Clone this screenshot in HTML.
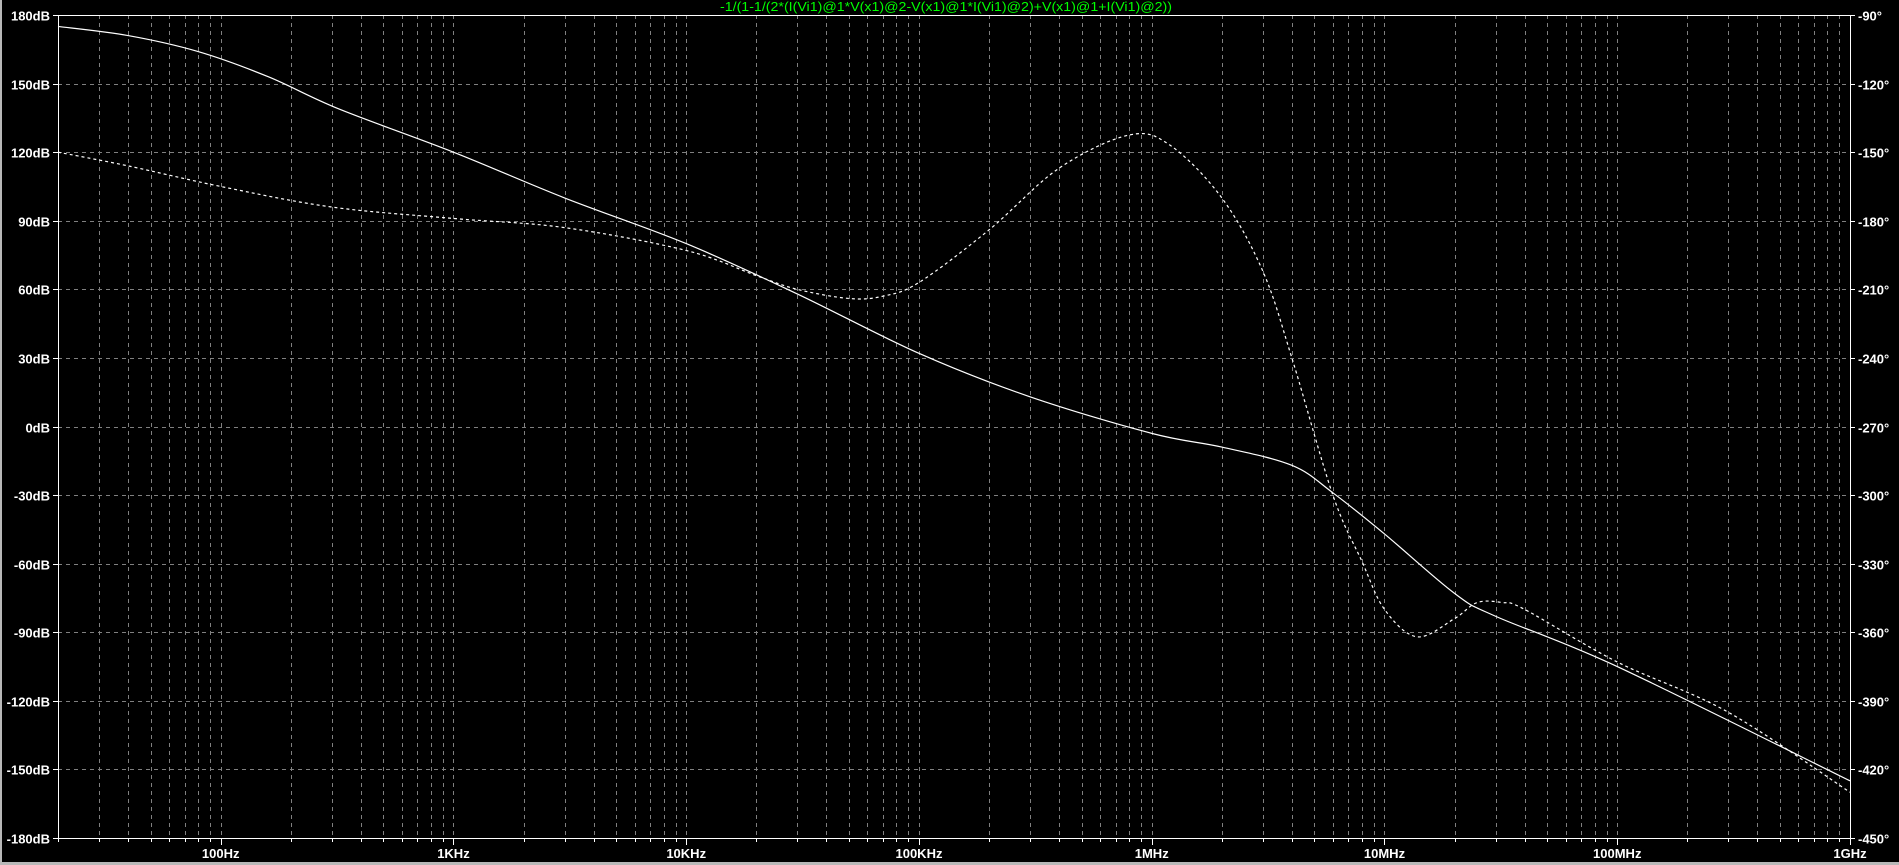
<!DOCTYPE html>
<html><head><meta charset="utf-8"><style>
html,body{margin:0;padding:0;background:#000;width:1899px;height:865px;overflow:hidden}
svg{display:block}
text{font-family:"Liberation Sans",Arial,sans-serif;font-weight:bold;font-size:13px;fill:#fff}
</style></head><body>
<svg id="s" width="1899" height="865" xmlns="http://www.w3.org/2000/svg">
<rect x="0" y="0" width="1899" height="865" fill="#000"/>
<rect x="0" y="0" width="2" height="865" fill="#b8b8b8"/>
<rect x="0" y="862" width="1899" height="3" fill="#b8b8b8"/>
<text x="720" y="11" textLength="452" lengthAdjust="spacingAndGlyphs" style="fill:#00ff00;font-weight:normal;font-size:13px">-1/(1-1/(2*(I(Vi1)@1*V(x1)@2-V(x1)@1*I(Vi1)@2)+V(x1)@1+I(Vi1)@2))</text>
<g id="grid"></g>
<g id="curves"></g>
</svg>
<script>
var L=58,R=1850,T=15,B=838,D=232.76,ns="http://www.w3.org/2000/svg";
function X(f){return L+D*(Math.log10(f)-Math.log10(20));}
function Y(db){return T+(180-db)*(B-T)/360;}
var g=document.getElementById('grid'),h='';
for(var e=1;e<=9;e++){for(var m=1;m<=9;m++){var f=m*Math.pow(10,e);if(f<20||f>1e9)continue;var x=Math.round(X(f))+0.5;
 if(f>20&&f<1e9)h+='<line x1="'+x+'" y1="'+T+'" x2="'+x+'" y2="'+B+'" stroke="#808080" stroke-dasharray="4 4"/>';
 h+='<line x1="'+x+'" y1="'+B+'" x2="'+x+'" y2="'+(B+(m==1?7:4))+'" stroke="#fff"/>';}}
for(var i=0;i<=12;i++){var y=Math.round(T+i*(B-T)/12)+0.5;var db=180-30*i,ph=-90-30*i;
 if(i>0&&i<12)h+='<line x1="'+L+'" y1="'+y+'" x2="'+R+'" y2="'+y+'" stroke="#808080" stroke-dasharray="4 4"/>';
 h+='<line x1="'+(L-5)+'" y1="'+y+'" x2="'+L+'" y2="'+y+'" stroke="#fff"/><line x1="'+R+'" y1="'+y+'" x2="'+(R+5)+'" y2="'+y+'" stroke="#fff"/>';
 h+='<text x="'+(L-8)+'" y="'+(y+5)+'" text-anchor="end">'+db+'dB</text>';
 h+='<text x="'+(R+8)+'" y="'+(y+5)+'">'+ph+'°</text>';}
h+='<line x1="'+(L+0.5)+'" y1="'+T+'" x2="'+(L+0.5)+'" y2="'+B+'" stroke="#fff"/>';
h+='<line x1="'+(R+0.5)+'" y1="'+T+'" x2="'+(R+0.5)+'" y2="'+B+'" stroke="#fff"/>';
h+='<line x1="'+L+'" y1="'+(T+0.5)+'" x2="'+R+'" y2="'+(T+0.5)+'" stroke="#fff"/>';
h+='<line x1="'+L+'" y1="'+(B+0.5)+'" x2="'+R+'" y2="'+(B+0.5)+'" stroke="#fff"/>';
var labs=[[100,'100Hz'],[1e3,'1KHz'],[1e4,'10KHz'],[1e5,'100KHz'],[1e6,'1MHz'],[1e7,'10MHz'],[1e8,'100MHz'],[1e9,'1GHz']];
labs.forEach(function(l){h+='<text x="'+X(l[0])+'" y="'+(B+20)+'" text-anchor="middle">'+l[1]+'</text>';});
g.innerHTML=h;
function path(pts){var p=pts.map(function(a){return [X(a[0]),Y(a[1])];});var d='M'+p[0][0]+' '+p[0][1];
 for(var i=0;i<p.length-1;i++){var p0=p[i-1]||p[i],p1=p[i],p2=p[i+1],p3=p[i+2]||p2;
 d+=' C'+(p1[0]+(p2[0]-p0[0])/6)+' '+(p1[1]+(p2[1]-p0[1])/6)+' '+(p2[0]-(p3[0]-p1[0])/6)+' '+(p2[1]-(p3[1]-p1[1])/6)+' '+p2[0]+' '+p2[1];}
 return d;}
var solid=[[20,175],[40,171],[80,164],[160,153],[320,139],[1e3,120],[3e3,100],[1e4,80],[3e4,58],[1e5,32],[3e5,13],[1e6,-3],[2e6,-9],[4e6,-17],[6e6,-29],[1e7,-47],[2e7,-73],[3e7,-83],[1e8,-105],[1e9,-155]];
var dash=[[20,120],[40,114],[100,105],[300,96],[1e3,91],[3e3,87],[1e4,77],[2e4,66],[3e4,60],[5e4,56],[7e4,57],[1e5,63],[2e5,86],[4e5,113],[8e5,127.5],[1.2e6,123],[2e6,100],[3e6,68],[4e6,30],[6e6,-30],[8e6,-59],[1e7,-80],[1.38e7,-92],[2e7,-84],[2.5e7,-77],[3.2e7,-77],[4e7,-80],[1e8,-103],[3e8,-125],[1e9,-160]];
document.getElementById('curves').innerHTML='<path d="'+path(solid)+'" fill="none" stroke="#fff" stroke-width="1.2"/><path d="'+path(dash)+'" fill="none" stroke="#fff" stroke-width="1.2" stroke-dasharray="3 3"/>';
</script>
</body></html>
